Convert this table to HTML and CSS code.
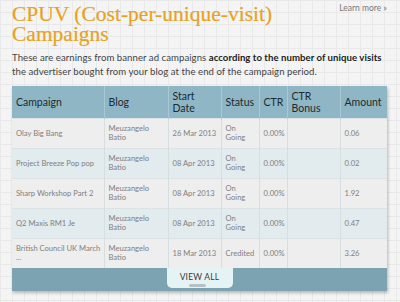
FILE: index.html
```html
<!DOCTYPE html>
<html>
<head>
<meta charset="utf-8">
<link rel="stylesheet" href="styles.css">
</head>
<body>
<div class="page">
  <div class="top">
    <h1 class="title">CPUV (Cost-per-unique-visit) Campaigns</h1>
    <a class="learn" href="#">Learn more »</a>
  </div>
  <p class="desc">These are earnings from banner ad campaigns <b>according to the number of unique visits</b> the advertiser bought from your blog at the end of the campaign period.</p>
  <div class="card">
    <table class="grid">
      <colgroup>
        <col class="c1"><col class="c2"><col class="c3"><col class="c4"><col class="c5"><col class="c6"><col class="c7">
      </colgroup>
      <thead>
        <tr><th>Campaign</th><th>Blog</th><th>Start<br>Date</th><th>Status</th><th>CTR</th><th>CTR<br>Bonus</th><th>Amount</th></tr>
      </thead>
      <tbody>
        <tr><td>Olay Big Bang</td><td>Meuzangelo<br>Batio</td><td class="nw">26 Mar 2013</td><td>On<br>Going</td><td>0.00%</td><td></td><td>0.06</td></tr>
        <tr><td>Project Breeze Pop pop</td><td>Meuzangelo<br>Batio</td><td class="nw">08 Apr 2013</td><td>On<br>Going</td><td>0.00%</td><td></td><td>0.02</td></tr>
        <tr><td>Sharp Workshop Part 2</td><td>Meuzangelo<br>Batio</td><td class="nw">08 Apr 2013</td><td>On<br>Going</td><td>0.00%</td><td></td><td>1.92</td></tr>
        <tr><td>Q2 Maxis RM1 Je</td><td>Meuzangelo<br>Batio</td><td class="nw">08 Apr 2013</td><td>On<br>Going</td><td>0.00%</td><td></td><td>0.47</td></tr>
        <tr><td><span class="nw">British Council UK March</span><br>...</td><td>Meuzangelo<br>Batio</td><td class="nw">18 Mar 2013</td><td>Credited</td><td>0.00%</td><td></td><td>3.26</td></tr>
      </tbody>
    </table>
    <div class="foot">
      <a class="viewall" href="#">VIEW ALL<span class="handle"></span></a>
    </div>
  </div>
</div>
</body>
</html>
```
FILE: styles.css
```css
html, body {
  margin: 0;
  padding: 0;
}
body {
  width: 400px;
  height: 302px;
  overflow: hidden;
  background-color: #f4f4f4;
  background-image:
    linear-gradient(to right, #e9e9e9 1px, transparent 1px),
    linear-gradient(to bottom, #e9e9e9 1px, transparent 1px);
  background-size: 12px 12px;
  font-family: Lato, "Open Sans", sans-serif;
}
.page {
  padding: 0 13px 0 12px;
}
.top {
  display: flex;
  justify-content: space-between;
  align-items: flex-start;
}
.title {
  margin: 4px 0 0 0;
  font-family: "Liberation Serif", "DejaVu Serif", serif;
  font-weight: normal;
  font-size: 21.5px;
  line-height: 20px;
  color: #e8a21c;
  width: 290px;
  -webkit-text-stroke: 0.2px #e8a21c;
}
.learn {
  margin-top: 3px;
  font-size: 8.5px;
  color: #777;
  text-decoration: none;
  white-space: nowrap;
}
.desc {
  margin: 7px 0 0 0;
  font-size: 9.6px;
  line-height: 14px;
  color: #444;
  letter-spacing: 0.05px;
}
.desc b {
  color: #222;
}
.card {
  margin-top: 7px;
  width: 375px;
  box-shadow: 1px 2px 3px rgba(0,0,0,0.25);
}
.grid {
  width: 100%;
  border-collapse: collapse;
  table-layout: fixed;
}
.c1 { width: 92px; }
.c2 { width: 64px; }
.c3 { width: 53px; }
.c4 { width: 38px; }
.c5 { width: 28px; }
.c6 { width: 53px; }
.c7 { width: 47px; }
.grid th {
  background: #8eb6c5;
  height: 32px;
  padding: 0 3px 0 4px;
  text-align: left;
  font-weight: normal;
  font-size: 10.5px;
  line-height: 12px;
  color: #1e2a2e;
  border-left: 1px solid #a9c8d3;
  box-sizing: border-box;
}
.grid th:first-child { border-left: none; }
.grid td {
  height: 30px;
  box-sizing: border-box;
  padding: 0 2px 0 4px;
  font-size: 7.6px;
  line-height: 9px;
  color: #808080;
  border-left: 1px solid #d5dfe2;
  border-top: 1px solid #dde3e5;
  vertical-align: middle;
  overflow: hidden;
}
.grid td:first-child { border-left: none; }
.nw { white-space: nowrap; }
.grid tbody tr:nth-child(odd) td { background: #eeeeee; }
.grid tbody tr:nth-child(even) td { background: #e2ecef; }
.foot {
  height: 23px;
  background: #7ba3b2;
  display: flex;
  justify-content: center;
}
.viewall {
  position: relative;
  width: 66px;
  height: 20px;
  background: #e6f3f5;
  border-radius: 0 0 5px 5px;
  color: #3a3a3a;
  font-size: 8.5px;
  letter-spacing: 0.2px;
  text-decoration: none;
  display: flex;
  justify-content: center;
  align-items: center;
  padding-bottom: 3px;
  box-sizing: border-box;
}
.handle {
  position: absolute;
  left: 22px;
  bottom: 1px;
  width: 17px;
  height: 3px;
  border-radius: 2px;
  background: #b9c0c2;
}
```
